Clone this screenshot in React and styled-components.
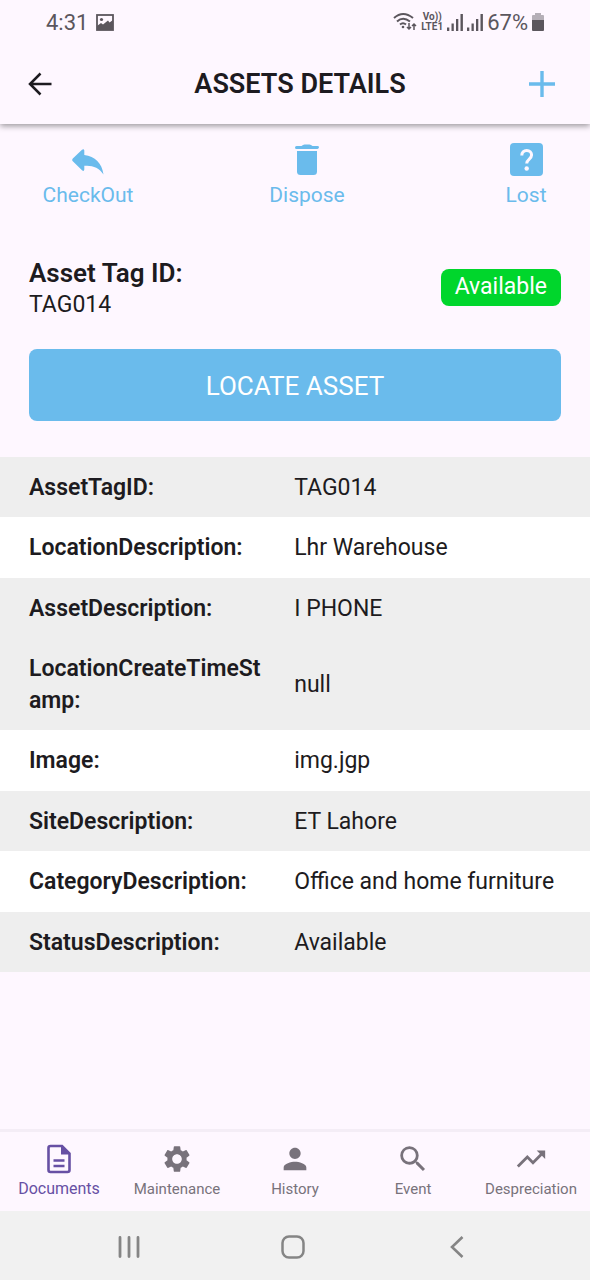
import React from 'react';
import styled, { createGlobalStyle } from 'styled-components';
import { MdSettings, MdPerson, MdSearch, MdTrendingUp } from 'react-icons/md';

const GlobalStyle = createGlobalStyle`
  * { box-sizing: border-box; }
  body { margin: 0; font-family: Roboto, sans-serif; color: #1d1b20; background: #fef7ff; }
  button { font: inherit; color: inherit; background: none; border: 0; padding: 0; cursor: pointer; }
  svg { display: block; flex: none; }
`;

const Screen = styled.div`
  min-height: 100vh;
  display: flex;
  flex-direction: column;
  background: #fef7ff;
`;

const StatusBar = styled.div`
  display: flex;
  align-items: center;
  justify-content: space-between;
  height: 44px;
  padding: 0 46px;
  font-size: 22px;
  color: #5b565d;
`;

const StatusGroup = styled.div`
  display: flex;
  align-items: center;
  gap: ${({ $gap }) => $gap}px;
`;

const Network = styled.span`
  display: flex;
  flex-direction: column;
  font-size: 10px;
  line-height: 10px;
  font-weight: 700;
  text-align: center;
`;

const TopArea = styled.div`
  background: #fef7ff;
  box-shadow: 0 2px 6px rgba(0, 0, 0, 0.4);
`;

const AppBar = styled.header`
  display: grid;
  grid-template-columns: 80px 1fr 96px;
  align-items: center;
  height: 80px;
`;

const BarButton = styled.button`
  && {
    display: flex;
    align-items: center;
    justify-content: center;
    height: 64px;
    color: ${({ $color }) => $color};
  }
`;

const Title = styled.h1`
  margin: 0;
  padding-left: 26px;
  text-align: center;
  font-size: 27px;
  line-height: 32px;
  font-weight: 600;
`;

const Actions = styled.div`
  display: flex;
  justify-content: space-between;
  padding: 16px 18px 0 42px;
`;

const Action = styled.button`
  && {
    display: flex;
    flex-direction: column;
    align-items: center;
    min-width: 92px;
    font-size: 21px;
    line-height: 32px;
    color: #6abbec;
  }
`;

const ActionIcon = styled.span`
  display: flex;
  align-items: center;
  height: 39px;
`;

const Summary = styled.section`
  display: flex;
  align-items: center;
  justify-content: space-between;
  padding: 46px 29px 0;
`;

const SummaryLabel = styled.h2`
  margin: 0;
  font-size: 26px;
  line-height: 32px;
  font-weight: 600;
`;

const SummaryValue = styled.p`
  margin: 0;
  font-size: 23px;
  line-height: 32px;
`;

const Badge = styled.span`
  margin-bottom: 4px;
  padding: 2px 14px 3px;
  border-radius: 8px;
  background: #00d62c;
  color: #fff;
  font-size: 23px;
  line-height: 32px;
`;

const LocateButton = styled.button`
  && {
    margin: 28px 29px 36px;
    padding-top: 2px;
    height: 72px;
    border-radius: 8px;
    background: #6abbec;
    color: #fff;
    font-size: 26px;
  }
`;

const Details = styled.table`
  width: 100%;
  border-collapse: collapse;
  table-layout: fixed;
  font-size: 23px;
  line-height: 32px;
`;

const Name = styled.th`
  width: 48%;
  padding: 15px 16px 13px 29px;
  font-weight: 600;
  text-align: left;
  overflow-wrap: anywhere;
`;

const Value = styled.td`
  padding: 15px 16px 13px 11px;
`;

const Row = styled.tr`
  background: ${({ $shaded }) => ($shaded ? '#eeeeee' : '#ffffff')};

  & > * {
    padding-bottom: ${({ $shaded }) => ($shaded ? 13 : 14)}px;
  }
`;

const Tabs = styled.nav`
  display: grid;
  grid-template-columns: repeat(5, 1fr);
  height: 82px;
  margin-top: auto;
  border-top: 3px solid #f4edf6;
`;

const Tab = styled.button`
  && {
    display: flex;
    flex-direction: column;
    align-items: center;
    gap: 2px;
    padding-top: 11px;
    font-size: ${({ $active }) => ($active ? 16 : 15)}px;
    line-height: 24px;
    white-space: nowrap;
    color: ${({ $active }) => ($active ? '#6750a4' : '#78727b')};
  }
`;

const TabIcon = styled.span`
  display: flex;
  align-items: center;
  height: 32px;
`;

const SystemBar = styled.div`
  display: grid;
  grid-template-columns: repeat(3, 28%);
  justify-content: center;
  height: 69px;
  padding: 2px 4px 0 0;
  background: #f1f1f1;
`;

const SystemButton = styled.button`
  && {
    display: flex;
    align-items: center;
    justify-content: center;
    color: #858585;
  }
`;

const details = [
  { name: 'AssetTagID:', value: 'TAG014', shaded: true },
  { name: 'LocationDescription:', value: 'Lhr Warehouse', shaded: false },
  { name: 'AssetDescription:', value: 'I PHONE', shaded: true },
  { name: 'LocationCreateTimeStamp:', value: 'null', shaded: true },
  { name: 'Image:', value: 'img.jgp', shaded: false },
  { name: 'SiteDescription:', value: 'ET Lahore', shaded: true },
  { name: 'CategoryDescription:', value: 'Office and home furniture', shaded: false },
  { name: 'StatusDescription:', value: 'Available', shaded: true },
];

const ImageIcon = () => (
  <svg width="18" height="17" viewBox="0 0 18 17">
    <rect x="1" y="1" width="16" height="15" fill="none" stroke="currentColor" strokeWidth="1.8" />
    <path d="M1 12l4-3 2 1.500 5-4 1.500 2L17 6v10H1z" fill="currentColor" />
    <circle cx="5.500" cy="5.500" r="1.600" fill="currentColor" />
  </svg>
);

const WifiIcon = () => (
  <svg width="24" height="20" viewBox="0 0 24 20" fill="none" stroke="currentColor" strokeWidth="2">
    <path d="M1 6Q10-2 20 6M4 9.500Q10 4 17 9.500M7 12.500Q10 10 13 12.500" />
    <circle cx="10" cy="15" r="1.300" fill="currentColor" stroke="none" />
    <path d="M16 11v6M14 15l2 2 2-2M21 18v-6M19 14l2-2 2 2" strokeWidth="1.500" />
  </svg>
);

const SignalIcon = () => (
  <svg width="16" height="17" viewBox="0 0 16 17" fill="currentColor">
    <path d="M0 13.500h2.300V17H0zM4.500 9.500h2.300V17H4.500zM9 5h2.300v12H9zM13.500 0h2.400v17h-2.400z" />
  </svg>
);

const BatteryIcon = () => (
  <svg width="12" height="18" viewBox="0 0 12 18">
    <path d="M3 0h6v2h2q1 0 1 1v5H0V3q0-1 1-1h2z" fill="#b5afb7" />
    <path d="M0 7h12v10q0 1-1 1H1q-1 0-1-1z" fill="#5b565d" />
  </svg>
);

const BackIcon = () => (
  <svg width="24" height="24" viewBox="0 0 24 24" fill="none" stroke="currentColor" strokeWidth="2.500">
    <path d="M23.500 12H2M12.500 1.500L2 12l10.500 10.500" />
  </svg>
);

const PlusIcon = () => (
  <svg width="26" height="26" viewBox="0 0 26 26" fill="none" stroke="currentColor" strokeWidth="3.400">
    <path d="M13 0v26M0 13h26" />
  </svg>
);

const UndoIcon = () => (
  <svg width="32" height="30" viewBox="0 -4 32 30" fill="currentColor">
    <path d="M.8 9.500L10 .8Q12-.8 12.300 1.500V6C23 7.500 30 14 31.500 25.500 27 18.500 20 16 12.300 16.800V20.500Q12 23 10 21.300L.8 12.300Q-.4 11 .8 9.500z" />
  </svg>
);

const TrashIcon = () => (
  <svg width="24" height="32" viewBox="0 0 24 32" fill="currentColor">
    <path d="M1.500 2H6.500Q8 .5 9.500.5h5Q16 .5 17.500 2h5q1.500 0 1.500 1.300T22.500 5h-21Q0 5 0 3.500T1.500 2z" />
    <path d="M2 7h20v20.500q0 3.500-3.500 3.500h-13Q2 31 2 27.500z" />
  </svg>
);

const LostIcon = () => (
  <svg width="33" height="33" viewBox="0 0 33 33">
    <rect width="33" height="33" rx="4" fill="currentColor" />
    <path d="M11.800 12.500c0-3 2-5 4.900-5s4.900 2 4.900 4.600c0 3.900-4.900 4-4.900 8.400" fill="none" stroke="#fef7ff" strokeWidth="3" />
    <circle cx="16.700" cy="25.500" r="2.200" fill="#fef7ff" />
  </svg>
);

const DocumentIcon = () => (
  <svg width="32" height="32" viewBox="0 0 32 32" fill="none" stroke="currentColor" strokeWidth="2.600">
    <path d="M7.500 3h11.500l7.500 7.500V27q0 2-2 2h-17q-2 0-2-2V5q0-2 2-2z" />
    <path d="M18 3v8.500h8.500z" fill="currentColor" stroke="none" />
    <path d="M10.500 17.500h11M10.500 23h11" />
  </svg>
);

const RecentsIcon = () => (
  <svg width="22" height="22" viewBox="0 0 22 22" fill="none" stroke="currentColor" strokeWidth="2.800" strokeLinecap="round">
    <path d="M2 1.500v19M11 1.500v19M20 1.500v19" />
  </svg>
);

const HomeIcon = () => (
  <svg width="24" height="24" viewBox="0 0 24 24" fill="none" stroke="currentColor" strokeWidth="2.500">
    <rect x="1.500" y="1.500" width="21" height="21" rx="6.500" />
  </svg>
);

const ChevronIcon = () => (
  <svg width="14" height="22" viewBox="0 0 14 22" fill="none" stroke="currentColor" strokeWidth="2.600">
    <path d="M12.500 1L2 11l10.500 10" />
  </svg>
);

const tabs = [
  { label: 'Documents', icon: <DocumentIcon />, active: true },
  { label: 'Maintenance', icon: <MdSettings size={32} /> },
  { label: 'History', icon: <MdPerson size={34} /> },
  { label: 'Event', icon: <MdSearch size={34} /> },
  { label: 'Despreciation', icon: <MdTrendingUp size={34} /> },
];

export default function App() {
  return (
    <Screen>
      <GlobalStyle />
      <TopArea>
        <StatusBar>
          <StatusGroup $gap={8}>
            <span>4:31</span>
            <ImageIcon />
          </StatusGroup>
          <StatusGroup $gap={4}>
            <WifiIcon />
            <Network>
              <span>Vo))</span>
              <span>LTE1</span>
            </Network>
            <SignalIcon />
            <SignalIcon />
            <span>67%</span>
            <BatteryIcon />
          </StatusGroup>
        </StatusBar>
        <AppBar>
          <BarButton $color="#1d1b20" aria-label="Back"><BackIcon /></BarButton>
          <Title>ASSETS DETAILS</Title>
          <BarButton $color="#6abbec" aria-label="Add"><PlusIcon /></BarButton>
        </AppBar>
      </TopArea>
      <Actions>
        <Action><ActionIcon><UndoIcon /></ActionIcon>CheckOut</Action>
        <Action><ActionIcon><TrashIcon /></ActionIcon>Dispose</Action>
        <Action><ActionIcon><LostIcon /></ActionIcon>Lost</Action>
      </Actions>
      <Summary>
        <div>
          <SummaryLabel>Asset Tag ID:</SummaryLabel>
          <SummaryValue>TAG014</SummaryValue>
        </div>
        <Badge>Available</Badge>
      </Summary>
      <LocateButton>LOCATE ASSET</LocateButton>
      <Details>
        <tbody>
          {details.map((item) => (
            <Row key={item.name} $shaded={item.shaded}>
              <Name scope="row">{item.name}</Name>
              <Value>{item.value}</Value>
            </Row>
          ))}
        </tbody>
      </Details>
      <Tabs>
        {tabs.map((tab) => (
          <Tab key={tab.label} $active={tab.active}>
            <TabIcon>{tab.icon}</TabIcon>
            {tab.label}
          </Tab>
        ))}
      </Tabs>
      <SystemBar>
        <SystemButton aria-label="Recent apps"><RecentsIcon /></SystemButton>
        <SystemButton aria-label="Home"><HomeIcon /></SystemButton>
        <SystemButton aria-label="Go back"><ChevronIcon /></SystemButton>
      </SystemBar>
    </Screen>
  );
}
